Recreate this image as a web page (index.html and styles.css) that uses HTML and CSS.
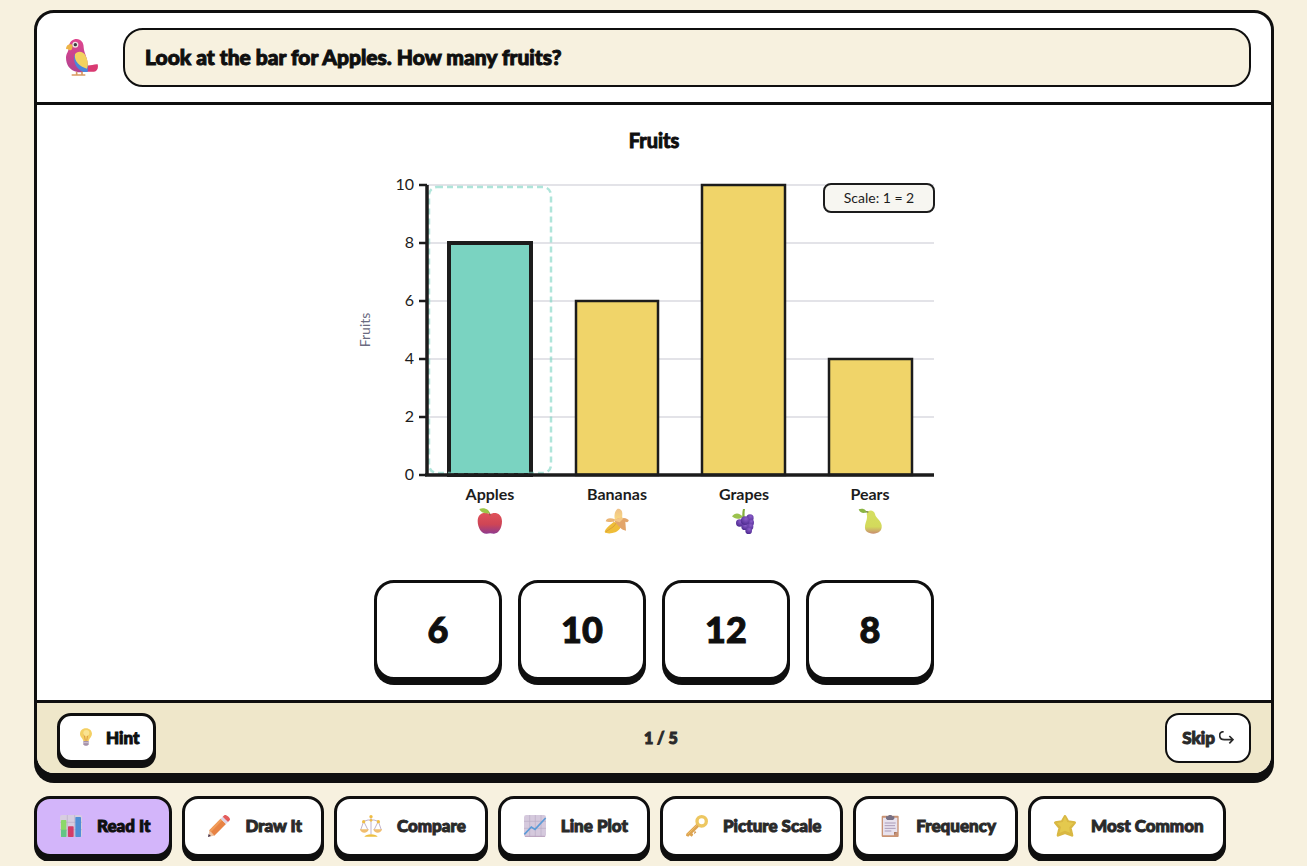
FILE: index.html
```html
<!DOCTYPE html>
<html lang="en">
<head>
    <meta charset="UTF-8">
    <meta name="viewport" content="width=device-width, initial-scale=1.0">
    <title>Fruits</title>
    <link rel="stylesheet" href="styles.css">
</head>
<body>
    <div class="card">
        <header class="card-header">
            <div class="avatar">
                <svg width="32" height="37" viewBox="0 0 96 111">
                    <defs>
                        <linearGradient id="feather" x1="0" y1="0" x2="0" y2="1"><stop offset="0" stop-color="#e0468e"/><stop offset="1" stop-color="#b04291"/></linearGradient>
                    </defs>
                    <path d="M58 79 C72 82 82 75 95 76 C98 88 93 98 84 98 L56 98z" fill="#d93a72"/>
                    <path d="M8 24 C11 6 21 0 32 0 C45 1 53 10 53 25 C54 45 68 60 65 86 C61 100 44 102 31 98 C12 94 0 77 0 56 C0 43 9 38 8 24z" fill="url(#feather)"/>
                    <path d="M26 46 C20 67 29 89 52 99 L65 99 C68 74 59 63 49 44z" fill="#4a86dc"/>
                    <path d="M27 46 C32 34 53 36 58 49 C66 63 68 77 63 89 C43 84 23 67 27 46z" fill="#f3d260"/>
                    <path d="M19 17 C6 12 0 20 0 31 C5 27 9 34 14 34 C20 31 20 24 19 17z" fill="#edb447"/>
                    <circle cx="28" cy="17" r="9" fill="#e9e5df"/>
                    <circle cx="28" cy="17" r="5" fill="#3d3a40"/>
                    <path d="M32 98v9M48 98v9M17 108H58" fill="none" stroke="#d99a60" stroke-width="5"/>
                </svg>
            </div>
            <div class="speech">Look at the bar for Apples. How many fruits?</div>
        </header>

        <main class="activity">
            <h1 class="chart-title">Fruits</h1>
            <svg class="chart" viewBox="0 0 600 380" role="img" aria-label="Bar chart of fruits">
                <defs>
                    <linearGradient id="apple" x1="0" y1="0" x2="0" y2="1"><stop offset="0" stop-color="#e0525a"/><stop offset=".55" stop-color="#cf4555"/><stop offset="1" stop-color="#8f3a8e"/></linearGradient>
                    <linearGradient id="banana" x1="0" y1="0" x2="0" y2="1"><stop offset="0" stop-color="#eec088"/><stop offset="1" stop-color="#fbdc80"/></linearGradient>
                    <radialGradient id="grape" cx=".6" cy=".3" r=".7"><stop offset="0" stop-color="#8a5cc9"/><stop offset="1" stop-color="#4f2b91"/></radialGradient>
                    <linearGradient id="pear" x1="0" y1="0" x2="0" y2="1"><stop offset="0" stop-color="#d5df62"/><stop offset=".7" stop-color="#d3da5b"/><stop offset="1" stop-color="#c98d70"/></linearGradient>
                </defs>
                <path class="grid" d="M73 20H580M73 78H580M73 136H580M73 194H580M73 252H580"/>

                <!-- bars -->
                <rect class="bar bar-active" x="95" y="78" width="82" height="232"/>
                <rect class="bar" x="222" y="136" width="82" height="174"/>
                <rect class="bar" x="348" y="20" width="83" height="290"/>
                <rect class="bar" x="475" y="194" width="83" height="116"/>

                <rect class="focus" x="75" y="22" width="122" height="286" rx="8"/>
                <path class="tick" d="M65 20h8M65 78h8M65 136h8M65 194h8M65 252h8M65 310h8"/>
                <path class="axis" d="M73 20V310M71 310H580"/>

                <g class="value">
                    <text x="60" y="25">10</text>
                    <text x="60" y="83">8</text>
                    <text x="60" y="141">6</text>
                    <text x="60" y="199">4</text>
                    <text x="60" y="257">2</text>
                    <text x="60" y="315">0</text>
                </g>
                <text class="axis-name" transform="translate(16 165) rotate(-90)">Fruits</text>

                <rect class="scale-box" x="470" y="19" width="110" height="28" rx="7"/>
                <text class="scale-text" x="525" y="38">Scale: 1 = 2</text>

                <g class="category">
                    <text x="136" y="335">Apples</text>
                    <text x="263" y="335">Bananas</text>
                    <text x="390" y="335">Grapes</text>
                    <text x="516" y="335">Pears</text>
                </g>

                <!-- fruit pictures -->
                <svg x="123" y="343" width="26" height="26" viewBox="0 0 78 78">
                    <path d="M39 19 C51 10 75 14 75 40 C75 61 64 78 50 77 C44 75 35 75 29 77 C14 78 2 60 2 39 C2 14 27 10 39 19z" fill="url(#apple)"/>
                    <path d="M39 22 C39 15 36 12 30 9" fill="none" stroke="#76583b" stroke-width="3"/>
                    <path d="M7 3 C20 -2 36 3 38 16 C24 17 11 14 7 3z" fill="#9cc648"/>
                </svg>
                <svg x="250" y="343" width="26" height="26" viewBox="0 0 78 78">
                    <path d="M33 38 C30 23 31 9 41 2 C50 2 55 7 55 17 L54 39z" fill="url(#banana)"/>
                    <path d="M29 42 C14 54 4 62 2 72 C8 78 22 77 34 73 C47 67 52 57 51 45z" fill="#efbd38"/>
                    <path d="M35 46 C31 58 17 62 5 72" fill="none" stroke="#d9a038" stroke-width="3"/>
                    <path d="M30 42 C22 40 14 45 5 40 C7 29 20 29 33 34z" fill="#eab575"/>
                    <path d="M31 38 C42 28 61 26 74 36 C74 42 69 44 64 41 L66 68 C53 66 42 54 31 38z" fill="#e3a56a"/>
                    <path d="M31 38 C42 28 52 28 59 31 L47 43z" fill="#f4c886"/>
                </svg>
                <svg x="377" y="343" width="26" height="26" viewBox="0 0 78 78">
                    <path d="M33 29 C35 20 33 12 36 3 L42 3 C40 13 41 22 41 32z" fill="#83ae3d"/>
                    <path d="M3 25 C11 13 26 13 36 27 C23 36 11 33 3 25z" fill="#9bc24d"/>
                    <g fill="url(#grape)">
                        <circle cx="26" cy="45" r="11"/><circle cx="57" cy="30" r="11"/><circle cx="59" cy="44" r="10"/>
                        <circle cx="57" cy="56" r="10"/><circle cx="41" cy="56" r="10"/><circle cx="53" cy="68" r="10"/>
                        <circle cx="42" cy="38" r="13"/>
                    </g>
                </svg>
                <svg x="503" y="343" width="26" height="26" viewBox="0 0 78 78">
                    <path d="M29 17 C32 4 51 4 54 18 C56 31 72 36 74 52 C76 69 64 77 49 77 C33 76 22 70 24 54 C25 42 33 33 29 17z" fill="url(#pear)"/>
                    <path d="M24 11 L34 12" stroke="#76843a" stroke-width="4"/>
                    <path d="M5 4 C15 1 26 2 28 13 C19 18 9 15 5 4z" fill="#8bb544"/>
                </svg>
            </svg>

            <div class="answers">
                <button type="button" class="answer">6</button>
                <button type="button" class="answer">10</button>
                <button type="button" class="answer">12</button>
                <button type="button" class="answer">8</button>
            </div>
        </main>

        <footer class="card-footer">
            <button type="button" class="hint">
                <svg width="24" height="18" viewBox="0 0 72 54">
                    <path d="M36 1 C24 1 18 9 18 18 C18 27 26 30 28 39 H44 C46 30 54 26 54 17 C53 8 47 1 36 1z" fill="#f4d064"/>
                    <path d="M30 18 L34 38M42 18 L38 38" stroke="#df9f49" stroke-width="3"/>
                    <ellipse cx="37" cy="15" rx="9" ry="9" fill="#fae391"/>
                    <path d="M28 39H44V49L40 53H32L28 49z" fill="#a592a9"/>
                    <path d="M28 44H44" stroke="#cfc2d1" stroke-width="3"/>
                </svg>
                Hint
            </button>
            <span class="progress">1 / 5</span>
            <button type="button" class="skip">
                Skip
                <svg width="15" height="13" viewBox="0 0 45 39">
                    <path d="M14 2 C5 2 2 7 2 13 C2 22 8 26 16 26 H42 M31 15 L42 26 L31 37" fill="none" stroke="#2a2a2a" stroke-width="5"/>
                </svg>
            </button>
        </footer>
    </div>

    <nav class="modes">
        <button type="button" class="mode active">
            <svg class="mode-icon" viewBox="0 0 66 66">
                <rect width="66" height="66" rx="6" fill="#d7cde0"/>
                <path d="M0 22H66M0 44H66M22 0V66M44 0V66" stroke="#b9aec8" stroke-width="2"/>
                <rect x="3" y="15" width="16" height="51" rx="2" fill="#8cd968"/>
                <rect x="3" y="44" width="16" height="22" rx="2" fill="#62c584"/>
                <rect x="24" y="34" width="17" height="32" rx="2" fill="#d33c68"/>
                <rect x="46" y="6" width="17" height="60" rx="2" fill="#4f8fd5"/>
            </svg>
            Read It
        </button>
        <button type="button" class="mode">
            <svg class="mode-icon" viewBox="0 0 66 66">
                <path d="M1 65 L4 46 L19 62z" fill="#edc4a3"/>
                <path d="M0 66 L2 57 L9 63z" fill="#443149"/>
                <path d="M4 46 L38 11 L54 27 L19 62z" fill="#e78344"/>
                <path d="M4 46 L38 11 L43 16 L9 51z" fill="#f09c59"/>
                <path d="M38 11 L44 5 L60 21 L54 27z" fill="#ddd4e6"/>
                <path d="M44 5 L49 1 C54 -3 70 11 65 16 L60 21z" fill="#e45c5b"/>
            </svg>
            Draw It
        </button>
        <button type="button" class="mode">
            <svg class="mode-icon" viewBox="0 0 66 66">
                <path d="M33 4V58M11 19 L24 15 H42 L55 19M11 19 L2 45M11 19 L24 45M55 19 L42 45M55 19 L64 45" fill="none" stroke="#c1b3c9" stroke-width="3"/>
                <path d="M0 43H26C24 57 2 57 0 43zM40 43H66C64 57 42 57 40 43z" fill="#f0bd6f"/>
                <path d="M13 65 C17 55 49 55 53 65z" fill="#edbf42"/>
                <circle cx="33" cy="5" r="5" fill="#efbd45"/><circle cx="33" cy="16" r="4" fill="#efbd45"/>
                <circle cx="11" cy="20" r="5" fill="#efbd45"/><circle cx="55" cy="20" r="5" fill="#efbd45"/>
            </svg>
            Compare
        </button>
        <button type="button" class="mode">
            <svg class="mode-icon" viewBox="0 0 66 66">
                <rect width="66" height="66" rx="7" fill="#d5c9dd"/>
                <path d="M17 0V66M34 0V66M51 0V66M0 19H66M0 40H66" stroke="#b9acc5" stroke-width="2"/>
                <path d="M1 58 L22 36 L33 43 L65 9" fill="none" stroke="#5c9bd7" stroke-width="5"/>
                <path d="M3 64H63" stroke="#baa2bd" stroke-width="3"/>
            </svg>
            Line Plot
        </button>
        <button type="button" class="mode">
            <svg class="mode-icon" viewBox="0 0 66 66">
                <circle cx="47" cy="19" r="14" fill="none" stroke="#edc761" stroke-width="10"/>
                <path d="M31 27 L39 35 L19 55 L22 59 L17 65 L11 61 L7 65 L0 62 L1 56z" fill="#dda451"/>
                <path d="M26 47 L31 52 L24 58" fill="#cf9347"/>
                <path d="M34 29 L5 58" stroke="#efbe68" stroke-width="3"/>
            </svg>
            Picture Scale
        </button>
        <button type="button" class="mode">
            <svg class="mode-icon" viewBox="0 0 66 66">
                <rect x="8" y="2" width="51" height="64" rx="3" fill="#c99272"/>
                <path d="M12 8H55V51L45 61H12z" fill="#e8e2ee"/>
                <path d="M45 61V51H55z" fill="#ac7961"/>
                <path d="M17 24H50M17 32H48M17 40H50M17 48H37" stroke="#aa9ab7" stroke-width="3"/>
                <path d="M21 4H27C28 -1 39 -1 40 4H46V11L42 15H25L21 11z" fill="#777084"/>
            </svg>
            Frequency
        </button>
        <button type="button" class="mode">
            <svg class="mode-icon" viewBox="0 0 66 66">
                <path d="M33 4 L42 20 L62 23 L49 39 L54 61 L33 53 L12 61 L17 39 L4 23 L24 20z" fill="#d9b843" stroke="#d9b843" stroke-width="8" stroke-linejoin="round"/>
                <path d="M33 5 L40 21 L59 24 L46 37 L48 53 L33 47 L16 54 L21 36 L8 24 L26 21z" fill="#e4c94e"/>
            </svg>
            Most Common
        </button>
    </nav>
</body>
</html>
```
FILE: styles.css
```css
* {
    box-sizing: border-box;
}
body {
    margin: 0;
    padding: 10px 33px 4px 34px;
    background-color: #f7f1df;
    color: #0f0f0f;
    font-family: Lato, sans-serif;
    font-weight: 900;
}
button {
    font-family: inherit;
    font-weight: 900;
    color: #0f0f0f;
    background-color: #fff;
    border: 3px solid #0f0f0f;
    cursor: pointer;
}
.card {
    background-color: #fff;
    border: 3px solid #0f0f0f;
    border-radius: 20px;
    box-shadow: 0 7px 0 #0f0f0f;
    overflow: hidden;
}
.card-header {
    display: flex;
    align-items: center;
    gap: 16px;
    padding: 15px 20px;
    border-bottom: 3px solid #0f0f0f;
}
.avatar {
    display: flex;
    justify-content: center;
    width: 50px;
}
.speech,
.chart-title,
.answer,
.hint,
.skip,
.progress,
.mode {
    -webkit-text-stroke: 1px currentColor;
}
.speech {
    flex: 1;
    padding: 13px 20px 15px;
    background-color: #f7f1df;
    border: 2px solid #0f0f0f;
    border-radius: 20px;
    font-size: 21px;
    line-height: 27px;
}
.activity {
    display: flex;
    flex-direction: column;
    align-items: center;
    padding: 23px 20px 20px;
}
.chart-title {
    margin: 0 0 13px;
    font-size: 20px;
    line-height: 24px;
}
.chart {
    width: 100%;
    max-width: 600px;
    margin-bottom: 35px;
}
.grid {
    fill: none;
    stroke: #e3e3e8;
    stroke-width: 2;
}
.bar {
    fill: #f0d469;
    stroke: #1c1c1c;
    stroke-width: 2.5;
}
.bar-active {
    fill: #7ad3c1;
    stroke-width: 4;
}
.tick {
    stroke: #1c1c1c;
    stroke-width: 2.5;
}
.axis {
    fill: none;
    stroke: #1c1c1c;
    stroke-width: 3.5;
}
.focus {
    fill: none;
    stroke: #7ad3c1;
    stroke-width: 2.5;
    stroke-dasharray: 6 4;
    opacity: 0.6;
}
.value {
    font-size: 16px;
    font-weight: 400;
    text-anchor: end;
    fill: #1c1c1c;
}
.axis-name {
    font-size: 14px;
    font-weight: 400;
    text-anchor: middle;
    fill: #6b6b80;
}
.scale-box {
    fill: #f7f6f1;
    stroke: #1c1c1c;
    stroke-width: 2;
}
.scale-text {
    font-size: 14px;
    font-weight: 400;
    text-anchor: middle;
    fill: #1c1c1c;
}
.category {
    font-size: 16px;
    font-weight: 700;
    text-anchor: middle;
    fill: #1c1c1c;
}
.answers {
    display: grid;
    grid-template-columns: repeat(4, 1fr);
    gap: 16px;
    width: 100%;
    max-width: 560px;
}
.answer {
    height: 100px;
    padding: 0 0 2px;
    border-radius: 20px;
    box-shadow: 0 5px 0 #0f0f0f;
    font-size: 36px;
}
.card-footer {
    display: flex;
    align-items: center;
    justify-content: space-between;
    padding: 10px 20px;
    background-color: #efe7ca;
    border-top: 3px solid #0f0f0f;
}
.hint,
.skip {
    display: flex;
    align-items: center;
    height: 50px;
    padding: 0 14px 2px;
    border-radius: 14px;
    font-size: 17px;
}
.hint {
    gap: 8px;
    box-shadow: 0 5px 0 #0f0f0f;
}
.skip {
    gap: 4px;
    padding: 0 15px 2px;
    border-width: 2px;
    color: #2a2a2a;
}
.progress {
    padding-bottom: 2px;
    font-size: 16px;
    color: #2a2a2a;
}
.modes {
    display: flex;
    flex-wrap: wrap;
    gap: 10px;
    margin-top: 20px;
}
.mode {
    display: flex;
    align-items: center;
    gap: 11px;
    height: 61px;
    padding: 0 19px 2px;
    border-radius: 16px;
    box-shadow: 0 5px 0 #0f0f0f;
    font-size: 17px;
    color: #2a2a2a;
}
.mode.active {
    background-color: #d3b5fa;
    color: #0f0f0f;
}
.mode-icon {
    width: 30px;
    height: 22px;
}
```
